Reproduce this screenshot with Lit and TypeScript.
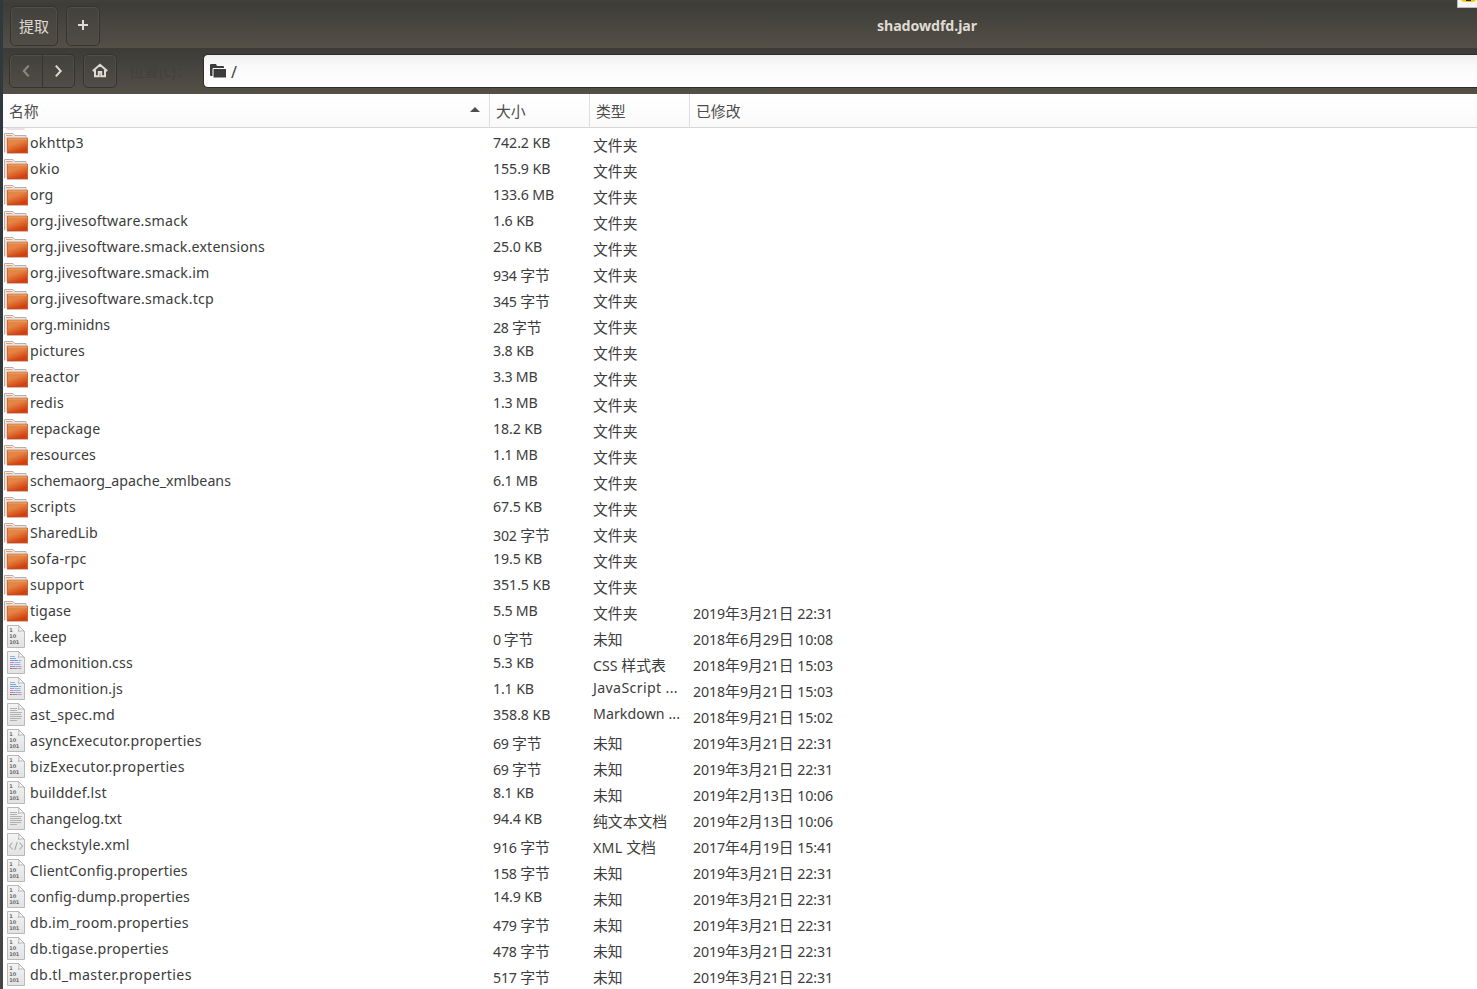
import { LitElement, html, svg, css } from "lit";
import { customElement } from "lit/decorators.js";

type Kind = "folder" | "bin" | "code" | "text" | "xml";
interface Entry { kind: Kind; name: string; nameW: number; size: string; type: string; date: string; }

const e = (kind: Kind, name: string, nameW: number, size: string, type = "文件夹", date = ""): Entry =>
  ({ kind, name, nameW, size, type, date });

const U = "未知";
const D = "2019年3月21日 22:31";
const ENTRIES: Entry[] = [
  e("folder", "okhttp3", 54.5, "742.2 KB"),
  e("folder", "okio", 30.5, "155.9 KB"),
  e("folder", "org", 24, "133.6 MB"),
  e("folder", "org.jivesoftware.smack", 158.5, "1.6 KB"),
  e("folder", "org.jivesoftware.smack.extensions", 235.5, "25.0 KB"),
  e("folder", "org.jivesoftware.smack.im", 180, "934 字节"),
  e("folder", "org.jivesoftware.smack.tcp", 184.5, "345 字节"),
  e("folder", "org.minidns", 80.5, "28 字节"),
  e("folder", "pictures", 55.5, "3.8 KB"),
  e("folder", "reactor", 50.5, "3.3 MB"),
  e("folder", "redis", 34.5, "1.3 MB"),
  e("folder", "repackage", 70.8, "18.2 KB"),
  e("folder", "resources", 66.5, "1.1 MB"),
  e("folder", "schemaorg_apache_xmlbeans", 201.5, "6.1 MB"),
  e("folder", "scripts", 46.5, "67.5 KB"),
  e("folder", "SharedLib", 68.5, "302 字节"),
  e("folder", "sofa-rpc", 57, "19.5 KB"),
  e("folder", "support", 54.5, "351.5 KB"),
  e("folder", "tigase", 41.5, "5.5 MB", "文件夹", D),
  e("bin", ".keep", 37.5, "0 字节", U, "2018年6月29日 10:08"),
  e("code", "admonition.css", 103.3, "5.3 KB", "CSS 样式表", "2018年9月21日 15:03"),
  e("code", "admonition.js", 93.5, "1.1 KB", "JavaScript ...", "2018年9月21日 15:03"),
  e("text", "ast_spec.md", 85.5, "358.8 KB", "Markdown ...", "2018年9月21日 15:02"),
  e("bin", "asyncExecutor.properties", 172.3, "69 字节", U, D),
  e("bin", "bizExecutor.properties", 155.3, "69 字节", U, D),
  e("bin", "builddef.lst", 77.3, "8.1 KB", U, "2019年2月13日 10:06"),
  e("text", "changelog.txt", 92.5, "94.4 KB", "纯文本文档", "2019年2月13日 10:06"),
  e("xml", "checkstyle.xml", 100, "916 字节", "XML 文档", "2017年4月19日 15:41"),
  e("bin", "ClientConfig.properties", 158.3, "158 字节", U, D),
  e("bin", "config-dump.properties", 160.3, "14.9 KB", U, D),
  e("bin", "db.im_room.properties", 159.3, "479 字节", U, D),
  e("bin", "db.tigase.properties", 139.3, "478 字节", U, D),
  e("bin", "db.tl_master.properties", 162.3, "517 字节", U, D),
];

const LATIN = '14.2px "Noto Sans"';
const CJK_SIZE = 14.85;
const isCjk = (s: string) => /[\u3000-\u9fff]/.test(s);
const ctx = document.createElement("canvas").getContext("2d")!;

/** Sets the Latin runs of a label with the tracking that makes the label `width` wide. */
function fitted(text: string, width: number) {
  const runs = text.match(/[\u3000-\u9fff]+|[^\u3000-\u9fff]+/g) ?? [];
  ctx.font = LATIN;
  let natural = 0;
  let count = 0;
  for (const r of runs) {
    if (isCjk(r)) natural += r.length * CJK_SIZE;
    else { natural += ctx.measureText(r).width; count += r.length; }
  }
  const ls = count ? (width - 0.5 - natural) / count : 0;
  return runs.map(r => isCjk(r)
    ? html`<span class="cjk">${r}</span>`
    : html`<span style="letter-spacing:${ls.toFixed(3)}px">${r}</span>`);
}

function sizeWidth(s: string) {
  const digits = (s.match(/\d/g) ?? []).length * 8.27;
  const dot = s.includes(".") ? 3.6 : 0;
  return digits + dot + 3.4 + (s.endsWith("KB") ? 17.8 : s.endsWith("MB") ? 21.5 : 29.2);
}

const TYPE_W: Record<string, number> = {
  "CSS 样式表": 73.4, "JavaScript ...": 85.5, "Markdown ...": 87.5, "XML 文档": 63.4,
};

const folderIcon = svg`
  <path d="M.5 21.500V2.500h8.500l1.500 2h11.500v4" fill="#f3f1ef" stroke="#b5b0ac"/>
  <path d="M3 21V6h19" fill="none" stroke="#d9d5d1"/>
  <path d="M2 4.500h6.500" stroke="#ee9a6c"/>
  <path d="M1.800 5v16" stroke="#f6d3c0" stroke-width=".8"/>
  <path d="M3.400 7.200h20.200v14.200H3.400z" fill="url(#fold)" stroke="#c8501c" stroke-width=".8"/>
  <path d="M4 8h19" stroke="#f2b27c" stroke-width=".8"/>
  <path d="M3 21.900h21" stroke="#b52d08" stroke-width=".9"/>`;

const sheet = svg`
  <path d="M3.500 .5h11l6 6v16h-17z" fill="url(#sheet)" stroke="#b9b9b9"/>
  <path d="M14.500 .5c.8 2 .5 4-.2 6 2-.8 4-.8 6.200 0z" fill="#fafafa" stroke="#b4b4b4"/>`;

const lines = (rows: [number, number, number, string][]) =>
  rows.map(([x, y, w, c]) => svg`<path d="M${x} ${y}h${w}" stroke="${c}"/>`);

const marks: Record<Kind, unknown> = {
  folder: "",
  bin: svg`<g fill="#707070" font-family="DejaVu Sans" font-weight="bold" font-size="5">
    <text x="5.300" y="7.400">1</text><text x="5.300" y="13.400">10</text><text x="5.300" y="19.400" textLength="10">101</text></g>`,
  code: lines([[6, 5.5, 5, "#93b5da"], [6, 7.5, 6, "#78a5d8"], [6, 9.5, 8, "#6ca0dc"], [14.5, 9.5, 3, "#90b5dd"],
    [6, 11.5, 4, "#e07cc4"], [10.5, 11.5, 6, "#9ab8dc"], [6, 13.5, 3, "#e07cc4"], [9.5, 13.5, 7, "#8fb2da"],
    [6, 15.5, 5, "#6ca0dc"], [11.5, 15.5, 6, "#d98ac8"], [6, 17.5, 2.5, "#e84848"], [9, 17.5, 4, "#78a078"], [13.5, 17.5, 4, "#a0a0b8"]]),
  text: lines([[6, 5.5, 7, "#b0b0b0"], [6, 7.5, 7, "#b0b0b0"], [6, 9.5, 12, "#b0b0b0"], [6, 11.5, 11, "#b0b0b0"],
    [6, 13.5, 12, "#b0b0b0"], [6, 15.5, 11, "#b0b0b0"], [6, 17.5, 7, "#b0b0b0"]]),
  xml: svg`<path d="M8.500 9.500l-3 3.500 3 3.500M15.500 9.500l3 3.500-3 3.500M13.300 9l-2.600 8" fill="none" stroke="#aaa" stroke-width="1.100"/>`,
};

@customElement("app-root")
export class AppRoot extends LitElement {
  static styles = css`
    :host { display: block; width: 1477px; height: 989px; overflow: hidden; position: relative;
      font: 14.2px "Noto Sans", "Noto Sans CJK SC", sans-serif; color: #3c3c3c; background: #fff; }
    * { box-sizing: border-box; }
    .shell { display: flex; height: 989px; }
    .edge { width: 3px; flex: none; background: linear-gradient(#2f3a3f, #30393c 30%, #3a3b3b 60%, #464646); }
    .window { flex: 1; min-width: 0; display: flex; flex-direction: column; }
    .defs { position: absolute; width: 0; height: 0; }
    .strip { height: 3px; background: #403f39; flex: none; }
    .title { height: 45px; flex: none; display: flex; padding: 3px 7px; gap: 8px; align-items: flex-start;
      background: linear-gradient(#3d3c37, #545048); }
    .btn { height: 40px; border: 1px solid #34332f; border-radius: 5px; display: flex; align-items: center; justify-content: center;
      color: #dfdbd2; background: linear-gradient(#43413c, #504d46); box-shadow: inset 0 0 0 1px #524f48; flex: none; }
    .extract { width: 48px; font: 15px/36px "Noto Sans CJK SC", sans-serif; padding-bottom: 1px; }
    .add { width: 34px; padding-bottom: 2px; }
    .name { flex: 1; padding: 10px 0 0 777px; font-weight: 700; line-height: 20px; color: #dfdbd2; white-space: nowrap; margin-left: -8px; letter-spacing: -.08px; }
    .tools { height: 46px; flex: none; display: flex; align-items: flex-start; padding: 6px 0 0 6px; background: linear-gradient(#3c3b37, #545048); }
    .tools .btn { height: 34px; }
    .nav { width: 66px; padding: 0; }
    .nav svg { flex: 1; height: 32px; }
    .nav .next { border-left: 1px solid #35342f; }
    .home { width: 34px; margin-left: 8px; }
    .label { width: 86px; padding: 1px 0 0 12px; color: #42413b; line-height: 32px; white-space: nowrap; font: 15px/32px "Noto Sans", "Noto Sans CJK SC", sans-serif; }
    .location { flex: 1; height: 34px; border: 1px solid #2e2d2a; border-right: 0; border-radius: 5px 0 0 5px; display: flex; align-items: center;
      background: linear-gradient(#f0f0f0, #fafafa 35%, #fff); gap: 4px; padding-left: 6px; line-height: 30px; }
    .path { font-size: 16px; padding-top: 2px; }
    .head { height: 34px; flex: none; display: grid; grid-template-columns: 487px 100px 100px 1fr; border-bottom: 1px solid #d5d5d5;
      background: linear-gradient(#fff, #fafafa); font: 14.85px/34px "Noto Sans CJK SC", sans-serif; color: #4c4c4c; }
    .head div { padding-left: 6px; border-right: 1px solid #dedede; display: flex; justify-content: space-between; }
    .head div:last-child { border-right: 0; }
    .arrow { margin: 12px 8px 0 0; }
    .peek { height: 3px; flex: none; padding-left: 3px; }
    .peek i { display: block; width: 19px; height: 2px; border-radius: 0 0 8px 8px; background: #eee2df; }
    .row { height: 26px; flex: none; display: grid; grid-template-columns: 27px 463px 100px 100px 1fr; white-space: pre; line-height: 24px; }
    .icon { width: 24px; height: 26px; display: block; margin-left: 1px; }
    .cell { height: 24px; }
    .low { padding-top: 3px; }
    .high { margin-top: -1px; }
    .cjk { font: 14.85px/1 "Noto Sans CJK SC", sans-serif; }
    .corner { position: absolute; right: 0; top: 0; width: 20px; height: 8px; }
  `;

  private cell(text: string, width: number) {
    const cls = isCjk(text) ? "cell low" : text.endsWith("...") ? "cell high" : "cell";
    return html`<div class=${cls}>${fitted(text, width)}</div>`;
  }

  private row(r: Entry) {
    return html`<div class="row">
      <svg class="icon" viewBox="0 0 24 26">${r.kind === "folder" ? folderIcon : svg`${sheet}${marks[r.kind]}`}</svg>
      ${this.cell(r.name, r.nameW)}${this.cell(r.size, sizeWidth(r.size))}
      ${this.cell(r.type, TYPE_W[r.type] ?? 0)}${this.cell(r.date, 140.5)}
    </div>`;
  }

  render() {
    return html`
      <div class="shell"><div class="edge"></div><div class="window">
        <div class="strip"></div>
        <div class="title">
          <div class="btn extract">提取</div>
          <div class="btn add"><svg width="12" height="12"><path d="M6 1v10M1 6h10" stroke="#dfdbd2" stroke-width="2"/></svg></div>
          <div class="name">shadowdfd.jar</div>
        </div>
        <div class="tools">
          <div class="btn nav">
            <svg viewBox="0 0 32 32"><path d="M19 10.500l-5 5.500 5 5.500" fill="none" stroke="#8d8a82" stroke-width="2"/></svg>
            <svg class="next" viewBox="0 0 32 32"><path d="M13 10.500l5 5.500-5 5.500" fill="none" stroke="#dfdbd2" stroke-width="2"/></svg>
          </div>
          <div class="btn home"><svg width="16" height="16"><path d="M.8 8L8 1.800 15.200 8M3 7v6.200h3.800V9h2.400v4.200H13V7" fill="none" stroke="#dfdbd2" stroke-width="2"/></svg></div>
          <div class="label">位置(L)：</div>
          <div class="location"><svg width="17" height="16"><path d="M0 2q0-1 1-1h5l1 2h6q1 0 1 1v1H3.500q-1 0-1 1V13H1q-1 0-1-1z" fill="#3c3c3c"/><path d="M3.500 6H16v8.500H3.500z" fill="#3c3c3c"/></svg><span class="path">/</span></div>
        </div>
        <div class="head">
          <div>名称<svg class="arrow" width="12" height="7"><path d="M1 6L6 1l5 5z" fill="#4c4c4c"/></svg></div>
          <div>大小</div><div>类型</div><div>已修改</div>
        </div>
        <div class="peek"><i></i></div>
        ${ENTRIES.map(r => this.row(r))}
      </div></div>
      <svg class="corner" viewBox="0 0 20 8"><path d="M0 0h20v8H0z" fill="#bbb"/><path d="M1 0h19v7H1z" fill="#f5f5f5"/><path d="M4 0h15q-1 2-4 2h-7q-3 0-4-2z" fill="#f6c800"/><path d="M9 0h5v1H9z" fill="#222"/></svg>
      <svg class="defs"><defs>
        <linearGradient id="fold" x1="0" y1="0" x2=".5" y2="1"><stop offset="0" stop-color="#e08a45"/><stop offset=".45" stop-color="#e48444"/><stop offset="1" stop-color="#d2400f"/></linearGradient>
        <linearGradient id="sheet" x1="0" y1="0" x2="0" y2="1"><stop offset="0" stop-color="#f4f4f4"/><stop offset="1" stop-color="#e2e2e2"/></linearGradient>
      </defs></svg>`;
  }
}
